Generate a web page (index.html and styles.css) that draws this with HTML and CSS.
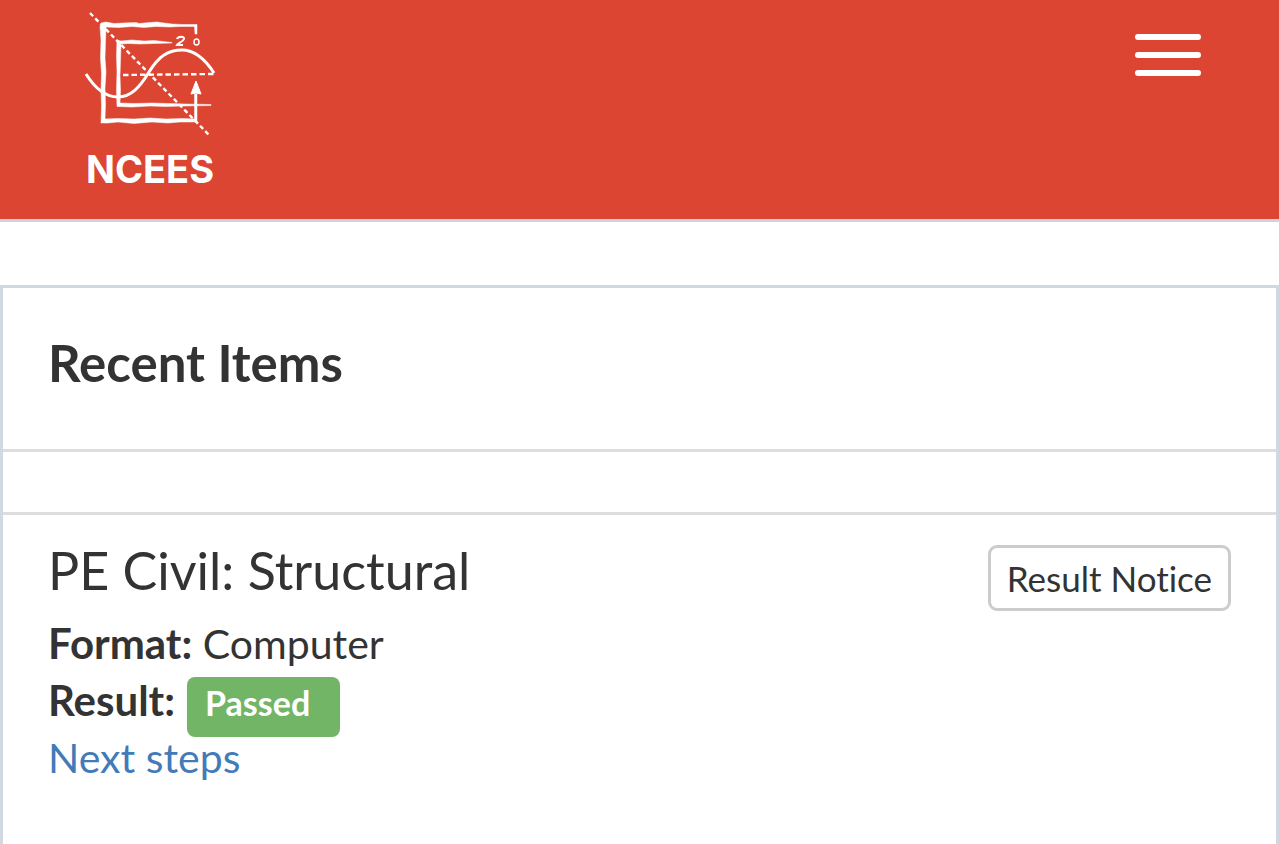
FILE: index.html
```html
<!DOCTYPE html>
<html lang="en">
<head>
    <meta charset="UTF-8">
    <meta name="viewport" content="width=device-width, initial-scale=1.0">
    <title>NCEES</title>
    <link rel="stylesheet" href="styles.css">
</head>
<body>
    <header class="header">
        <a class="logo" href="#" aria-label="NCEES">
            <svg class="logo-mark" viewBox="0 0 132 128" fill="none" stroke="#fff" aria-hidden="true">
                <path d="M6 3L126 126" stroke-width="2.4" stroke-dasharray="4.5 3"/>
                <path d="M39 65L130 64" stroke-width="2.4" stroke-dasharray="5.5 3"/>
                <!-- chalk frames, filled with a slightly rough edge -->
                <path d="M17 13L22 12L30 13.500L40 13L52 12.500L55 13.500L66 12.500L73 12L80 13L88 14L98 14.500L113 14.500V24H111L110.500 16.500L95 16.500L86 17L72 16.500L60 17.500L48 16.500L35 17.500L22 17L21.500 32L21 48L22 62L21 78L21.500 94L21 109L34 108.500L50 109L66 108L82 109L98 108.500L110.500 109V84H113V112L96 112L84 113L68 112L50 113.500L34 112L24 113L17 113L17.500 96L17 80L17.500 64L16.500 48L17 30L16 17Z" fill="#fff" stroke-width=".5"/>
                <path d="M112 71L117 84L112 83L107 84Z" fill="#fff" stroke-width="1"/>
                <path d="M33 30L37 31L48 30L60 31L70 30.500L88 32.500L88 33L70 33.500L56 34L44 33.500L37 34L36.500 50L36 66L36.500 80L36 93L50 93.500L68 93L84 93.500L100 94L127 94.500V95.500L100 96L82 96.500L66 96L48 97L33 96.500L32.500 80L33 62L32.500 46Z" fill="#fff" stroke-width=".5"/>
                <path d="M2 64C12 80 23 87 34 87C47 87 56 77 65 62C75 46 84 40 98 40C111 40 121 49 130 63" stroke-width="3"/>
                <path d="M93 29C94 26 101 26 100 29C99 32 94 33 93 35H99" stroke-width="2"/>
                <ellipse cx="112.500" cy="32" rx="2.500" ry="3" stroke-width="1.500"/>
            </svg>
            <span class="logo-text">NCEES</span>
        </a>
        <button class="menu" type="button" aria-label="Menu">
            <span></span>
            <span></span>
            <span></span>
        </button>
    </header>
    <main class="panel">
        <h1 class="panel-title">Recent Items</h1>
        <div class="panel-gap"></div>
        <section class="item">
            <div class="item-info">
                <h2 class="item-name">PE Civil: Structural</h2>
                <p><b>Format:</b> Computer</p>
                <p class="result"><b>Result:</b> <span class="label">Passed</span></p>
                <p><a class="link" href="#">Next steps</a></p>
            </div>
            <button class="btn" type="button">Result Notice</button>
        </section>
    </main>
</body>
</html>
```
FILE: styles.css
```css
*{
    box-sizing: border-box;
}
body{
    margin: 0;
    min-height: 100vh;
    display: flex;
    flex-direction: column;
    background: #fff;
    color: #333;
    font-family: Lato, "Liberation Sans", sans-serif;
    font-size: 41px;
    font-variant-ligatures: none;
    line-height: 57px;
}
h1, h2, p{
    margin: 0;
}
b{
    font-size: 42px;
}
.header{
    display: flex;
    justify-content: space-between;
    align-items: flex-start;
    padding: 10px 78px 28px 84px;
    background: #dc4532;
    border-bottom: 3px solid #cdd3d8;
}
.logo{
    display: flex;
    flex-direction: column;
    align-items: center;
    gap: 9px;
    color: #fff;
    text-decoration: none;
}
.logo-mark{
    width: 132px;
    height: 128px;
}
.logo-text{
    font-family: Inter, sans-serif;
    font-size: 38px;
    font-weight: 700;
    line-height: 44px;
}
.menu{
    display: flex;
    flex-direction: column;
    gap: 12px;
    margin: 24px 0 0;
    padding: 0;
    border: 0;
    background: none;
    cursor: pointer;
}
.menu span{
    width: 66px;
    height: 6px;
    border-radius: 3px;
    background: #fff;
}
.panel{
    flex: 1;
    margin-top: 63px;
    border: 3px solid #d0d8e2;
    border-bottom: 0;
}
.panel-title{
    padding: 44px 45px 55px;
    border-bottom: 3px solid #ddd;
    font-size: 51px;
    font-weight: 700;
    line-height: 62px;
}
.panel-gap{
    height: 63px;
    border-bottom: 3px solid #ddd;
}
.item{
    display: flex;
    justify-content: space-between;
    align-items: flex-start;
    padding: 30px 45px;
}
.item-name{
    margin-bottom: 20px;
    font-size: 52px;
    font-weight: 400;
    line-height: 50px;
}
.result{
    display: flex;
    gap: 12px;
    height: 57px;
}
.label{
    height: 60px;
    margin-top: 5px;
    padding: 0 30px 0 18px;
    border-radius: 8px;
    background: #73b566;
    color: #fff;
    font-size: 34px;
    font-weight: 700;
    line-height: 52px;
}
.link{
    color: #437ab8;
    text-decoration: none;
}
.btn{
    height: 66px;
    padding: 0 16px;
    border: 3px solid #ccc;
    border-radius: 9px;
    background: #fff;
    color: #333;
    font-family: inherit;
    font-size: 35px;
    font-variant-ligatures: none;
    cursor: pointer;
}
```
